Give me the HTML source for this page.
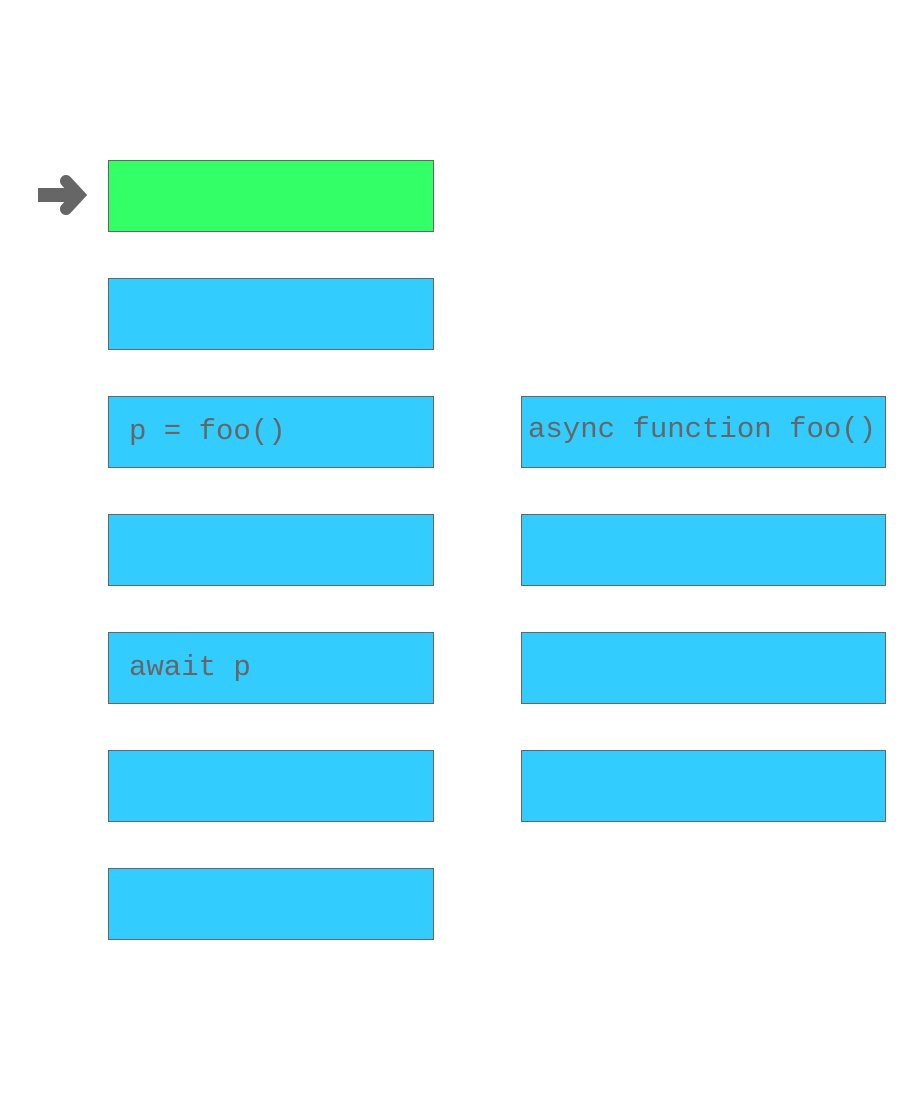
<!DOCTYPE html>
<html><head><style>
html,body{margin:0;padding:0;background:#fff;width:908px;height:1099px;overflow:hidden;position:relative}
.b{position:absolute;box-sizing:border-box;border:1px solid #666;background:#33ccff;height:72px;font-family:"Liberation Mono",monospace;font-size:29px;color:#666;line-height:70px;white-space:pre}
.l{left:108px;width:326px;padding-left:20px}
.r{left:521px;width:365px;padding-left:6px}
</style></head><body>
<svg style="position:absolute;left:0;top:0" width="120" height="240">
<rect x="38" y="188" width="40" height="14" fill="#666"/>
<path d="M66 181 L79 195 L66 209" fill="none" stroke="#666" stroke-width="12" stroke-linecap="round" stroke-linejoin="miter"/>
</svg>
<div class="b l" style="top:160px;background:#33ff66"></div>
<div class="b l" style="top:278px"></div>
<div class="b l" style="top:396px">p = foo()</div>
<div class="b l" style="top:514px"></div>
<div class="b l" style="top:632px">await p</div>
<div class="b l" style="top:750px"></div>
<div class="b l" style="top:868px"></div>
<div class="b r" style="top:396px;line-height:66px">async function foo()</div>
<div class="b r" style="top:514px"></div>
<div class="b r" style="top:632px"></div>
<div class="b r" style="top:750px"></div>
</body></html>
